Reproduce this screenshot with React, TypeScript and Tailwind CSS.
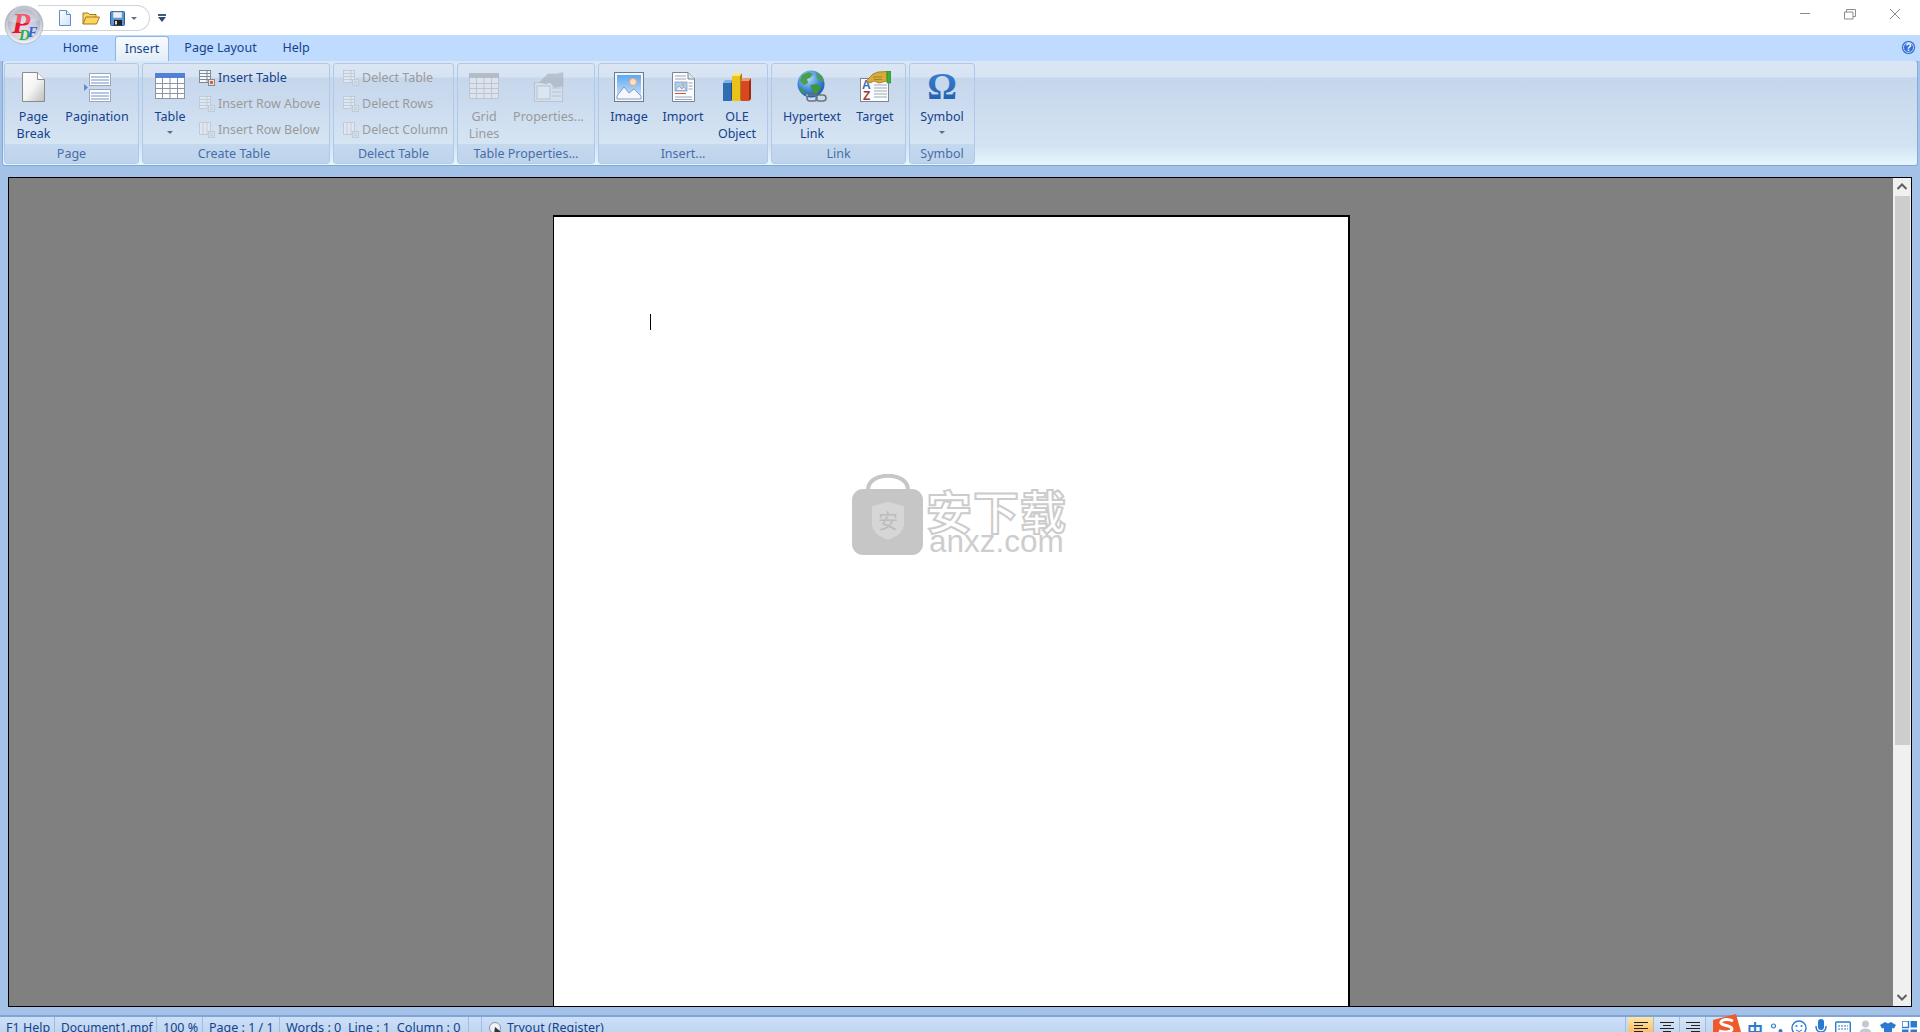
import React from "react";

function NewDocSmall() {
  return (
    <svg width="14" height="16" viewBox="0 0 14 16">
      <defs>
        <linearGradient id="qn" x1="0" y1="0" x2="1" y2="1">
          <stop offset="0" stopColor="#ffffff" />
          <stop offset="1" stopColor="#cfe2f7" />
        </linearGradient>
      </defs>
      <path d="M1.5 .5H8.5L12.5 4.5V15.5H1.5Z" fill="url(#qn)" stroke="#5d8fc6" />
      <path d="M8.5 .5V4.5H12.5" fill="#e8f1fb" stroke="#5d8fc6" />
    </svg>
  );
}

function FolderSmall() {
  return (
    <svg width="18" height="14" viewBox="0 0 18 14">
      <path d="M1 13V2H6L7.5 3.5H14V6" fill="#f7d774" stroke="#a37a1a" />
      <path d="M1 13L4 6H17.5L14.5 13Z" fill="#fbd55f" stroke="#a37a1a" />
    </svg>
  );
}

function SaveSmall() {
  return (
    <svg width="15" height="15" viewBox="0 0 15 15">
      <rect x=".5" y=".5" width="14" height="14" rx="1" fill="#5d94d6" stroke="#2b5f9f" />
      <rect x="3" y="1" width="9" height="6" fill="#e9f0f8" stroke="#7d9cc0" strokeWidth=".6" />
      <rect x="4" y="9" width="8" height="5.5" fill="#222" />
      <rect x="5" y="10" width="2" height="3.5" fill="#ddd" />
    </svg>
  );
}

function Orb() {
  return (
    <svg width="40" height="40" viewBox="0 0 40 40">
      <defs>
        <radialGradient id="orbIn" cx="0.5" cy="0.75" r="0.8">
          <stop offset="0" stopColor="#f0e2ea" />
          <stop offset="0.55" stopColor="#c9c9dc" />
          <stop offset="1" stopColor="#8d95aa" />
        </radialGradient>
        <linearGradient id="orbRim" x1="0" y1="0" x2="0" y2="1">
          <stop offset="0" stopColor="#a3a9b3" />
          <stop offset="1" stopColor="#f1f3f6" />
        </linearGradient>
      </defs>
      <circle cx="20" cy="20" r="19" fill="url(#orbRim)" stroke="#9aa1ac" strokeWidth=".6" />
      <circle cx="20" cy="20" r="16" fill="url(#orbIn)" />
      <text x="8" y="28" fontFamily="Liberation Serif" fontWeight="700" fontStyle="italic" fontSize="30" fill="#e8152a">P</text>
      <text x="15" y="35" fontFamily="Liberation Serif" fontWeight="700" fontStyle="italic" fontSize="15" fill="#1fb04a">D</text>
      <text x="24" y="32" fontFamily="Liberation Serif" fontWeight="700" fontStyle="italic" fontSize="14" fill="#3560d8">F</text>
      <path d="M5 16A15 15 0 0 1 35 15C26 19 14 19 5 16Z" fill="#ffffff" opacity=".3" />
    </svg>
  );
}

function HelpIcon() {
  return (
    <svg width="15" height="15" viewBox="0 0 15 15">
      <circle cx="7.5" cy="7.5" r="7" fill="#2f6fd6" stroke="#ffffff" strokeWidth=".5" />
      <circle cx="7.5" cy="7.5" r="5" fill="none" stroke="#ffffff" strokeWidth=".7" />
      <text x="7.5" y="11" textAnchor="middle" fontFamily="Liberation Sans" fontWeight="700" fontSize="10" fill="#fff">?</text>
    </svg>
  );
}

function PageBreakIcon() {
  return (
    <svg width="23" height="30" viewBox="0 0 23 30">
      <defs>
        <linearGradient id="pb" x1="0" y1="0" x2="1" y2="1">
          <stop offset="0" stopColor="#ffffff" />
          <stop offset="0.5" stopColor="#f4f4f4" />
          <stop offset="1" stopColor="#bdbdbd" />
        </linearGradient>
      </defs>
      <path d="M.5 .5H15.5L22.5 7.5V29.5H.5Z" fill="url(#pb)" stroke="#8b8b8b" />
      <path d="M15.5 .5V7.5H22.5" fill="#fff" stroke="#8b8b8b" />
    </svg>
  );
}

function PaginationIcon() {
  const lines = (y: number) => (
    <g>
      <rect x="5.5" y={y} width="21" height="12" fill="#fff" stroke="#9aa7b8" />
      <path d={`M7 ${y + 3.5}H25M7 ${y + 6.5}H25M7 ${y + 9.5}H25`} stroke="#6f8fc4" strokeWidth="1" />
    </g>
  );
  return (
    <svg width="27" height="29" viewBox="0 0 27 29">
      {lines(.5)}
      {lines(16.5)}
      <path d="M0 11L4 14.5L0 18Z" fill="#5c8bd6" />
    </svg>
  );
}

function BigTable({ gray = false }: { gray?: boolean }) {
  const head = gray ? "#b4bcc6" : "#4f81d8";
  const line = gray ? "#bcc5d0" : "#8a96a8";
  return (
    <svg width="30" height="26" viewBox="0 0 30 26" className="mb-[3px]">
      <rect x=".5" y=".5" width="29" height="25" fill={gray ? "#dbe3ed" : "#ffffff"} stroke={line} />
      <rect x="0" y="0" width="30" height="5" fill={head} />
      <path d="M0 10.5H30M0 15.5H30M0 20.5H30M7.5 5V26M15 5V26M22.5 5V26" stroke={line} strokeWidth="1" />
    </svg>
  );
}

function SmallTable({ active = false, column = false }: { active?: boolean; column?: boolean }) {
  const c = active ? "#7f8a99" : "#c1cbd8";
  return (
    <svg width="16" height="16" viewBox="0 0 16 16">
      <rect x=".5" y=".5" width="11" height="12" fill={active ? "#f6f8fb" : "#dfe7f1"} stroke={c} />
      <path d={column ? "M4 .5V12.5M8 .5V12.5" : "M.5 3.5H11.5M.5 6.5H11.5M.5 9.5H11.5M8 .5V12.5"} stroke={c} />
      <rect x="9.5" y="9.5" width="6" height="6" fill={active ? "#dfe6f0" : "#d4dde8"} stroke={c} />
      <rect x="11" y="11" width="3" height="3" fill={active ? "#e2602b" : "#c9d3de"} />
    </svg>
  );
}

function PropertiesIcon() {
  return (
    <svg width="30" height="30" viewBox="0 0 30 30" className="opacity-50">
      <rect x=".5" y="10.5" width="28" height="19" fill="#e0e6ee" stroke="#a6aeb8" />
      <rect x="3" y="14" width="13" height="13" fill="#eef2f6" stroke="#a6aeb8" />
      <path d="M18 16H27M18 20H27M18 24H27" stroke="#a6aeb8" />
      <path d="M6 10L14 2H23L29 .5V14L20 15L16 10L12 12Z" fill="#9ea6af" stroke="#8a929b" strokeWidth=".5" />
    </svg>
  );
}

function ImageIcon() {
  return (
    <svg width="30" height="30" viewBox="0 0 30 30">
      <defs>
        <linearGradient id="sky" x1="0" y1="0" x2="0" y2="1">
          <stop offset="0" stopColor="#5fa8f0" />
          <stop offset="1" stopColor="#d4e8fb" />
        </linearGradient>
      </defs>
      <rect x=".5" y=".5" width="29" height="29" fill="#f2f6fb" stroke="#6b7c8e" />
      <rect x="3" y="3" width="24" height="24" fill="url(#sky)" />
      <circle cx="19" cy="10" r="3.5" fill="#ffe0c2" stroke="#f3a27c" strokeWidth="1" />
      <path d="M3 24L10 15L15 21L20 17L27 24V27H3Z" fill="#f4f7fb" stroke="#6f88b8" strokeWidth=".8" />
    </svg>
  );
}

function ImportIcon() {
  return (
    <svg width="23" height="30" viewBox="0 0 23 30">
      <path d="M.5 .5H16L22.5 7V29.5H.5Z" fill="#fbfcfe" stroke="#7b8492" />
      <path d="M16 .5V7H22.5" fill="#dfe6ef" stroke="#7b8492" />
      <path d="M3 4H14M3 7H14" stroke="#9aa6b6" />
      <rect x="3" y="10" width="12" height="9" fill="#a9d0f2" stroke="#7f94b5" strokeWidth=".7" />
      <path d="M3.5 18.5L7 14L10 17L12 15L14.5 18.5Z" fill="#eef3fa" stroke="#5f7fb0" strokeWidth=".5" />
      <circle cx="11" cy="12.5" r="1.2" fill="#f4956a" />
      <path d="M16.5 11H20.5M16.5 14H20.5M16.5 17H20.5M3 25H20M3 27.5H20" stroke="#9aa6b6" />
      <path d="M3 21.5H14" stroke="#d94b3a" strokeWidth="1.2" />
    </svg>
  );
}

function OleIcon() {
  return (
    <svg width="29" height="30" viewBox="0 0 29 30">
      <path d="M0 11H8V29H0Z" fill="#2f6db3" />
      <path d="M0 11L2 8H10L8 11Z" fill="#7fb0e6" />
      <path d="M8 11L10 8V27L8 29Z" fill="#1e4c86" />
      <path d="M9 4H17V29H9Z" fill="#eac21a" />
      <path d="M9 4L11 1H19L17 4Z" fill="#f8e77a" />
      <path d="M17 4L19 1V27L17 29Z" fill="#a8840f" />
      <path d="M18 9H26V29H18Z" fill="#d8471e" />
      <path d="M18 9L20 6H28L26 9Z" fill="#f09a7a" />
      <path d="M26 9L28 6V27L26 29Z" fill="#9c2c0f" />
    </svg>
  );
}

function GlobeIcon() {
  return (
    <svg width="31" height="32" viewBox="0 0 31 32">
      <defs>
        <radialGradient id="gl" cx="0.4" cy="0.3" r="0.8">
          <stop offset="0" stopColor="#b5dcfb" />
          <stop offset="0.55" stopColor="#3e86d6" />
          <stop offset="1" stopColor="#174a9a" />
        </radialGradient>
      </defs>
      <circle cx="14" cy="14" r="13.5" fill="url(#gl)" />
      <path d="M5 5L12 2L16 4L13 8L10 9L11 13L7 15L3 11Z" fill="#4aa04a" />
      <path d="M19 3L25 6L27 12L23 11L20 8Z" fill="#4aa04a" />
      <path d="M13 15L20 14L24 17L20 24L16 23Z" fill="#3f9640" />
      <path d="M3 17L7 20L8 24L4 22Z" fill="#3f9640" />
      <rect x="10" y="25" width="10" height="6" rx="3" fill="none" stroke="#6c7480" strokeWidth="1.6" />
      <rect x="19" y="25" width="10" height="6" rx="3" fill="none" stroke="#6c7480" strokeWidth="1.6" />
      <path d="M9 25H11M29 31H31M30 24H31" stroke="#e8e04a" strokeWidth="1" />
    </svg>
  );
}

function TargetIcon() {
  return (
    <svg width="31" height="31" viewBox="0 0 31 31">
      <rect x=".5" y="7.5" width="28" height="23" fill="#fbfcfe" stroke="#7d8794" />
      <path d="M14 14H27M14 17H27M14 20H27M14 23H27M14 26H27" stroke="#9ca8b6" />
      <text x="2" y="18" fontFamily="Liberation Sans" fontWeight="700" fontSize="12" fill="#3a6cb6">A</text>
      <text x="3" y="29" fontFamily="Liberation Sans" fontWeight="700" fontSize="12" fill="#9c3a3a">Z</text>
      <path d="M6 10L13 3L18 1L27 .5V10L19 12L14 10L10 12Z" fill="#d9a93a" stroke="#8a6a18" strokeWidth=".7" />
      <path d="M13 6L22 6M14 8.5L22 8.5" stroke="#8a6a18" strokeWidth=".6" />
      <rect x="27" y="0" width="4" height="12" fill="#3fae3f" stroke="#1f7a1f" strokeWidth=".5" />
    </svg>
  );
}

function OmegaIcon() {
  return (
    <svg width="34" height="32" viewBox="0 0 34 32">
      <defs>
        <linearGradient id="om" x1="0" y1="0" x2="0" y2="1">
          <stop offset="0" stopColor="#3f86d8" />
          <stop offset="1" stopColor="#1b59a8" />
        </linearGradient>
      </defs>
      <text x="17" y="29" textAnchor="middle" fontFamily="Liberation Serif" fontWeight="700" fontSize="37" fill="url(#om)">Ω</text>
    </svg>
  );
}

function Arrow() {
  return <div className="w-0 h-0 border-l-[3px] border-r-[3px] border-t-[3px] border-l-transparent border-r-transparent border-t-[#5a6f8f]" />;
}

function Group({ title, width, titleClass = "", children }: { title: string; width: string; titleClass?: string; children: React.ReactNode }) {
  return (
    <div className={`${width} h-[101px] flex flex-col rounded-[3px] border border-[#aecae8] overflow-hidden bg-[linear-gradient(180deg,#dbe6f4_0,#d7e3f3_13px,#c6d7ec_14px,#c9d9ee_30px,#d6e5f3_80px)]`}>
      <div className="h-[80px] flex shrink-0">{children}</div>
      <div className={`flex-1 flex items-center justify-center bg-[linear-gradient(180deg,#c4d8ee,#bed4ec)] text-[#476ea9] text-[12.5px] leading-none pt-[1px] ${titleClass}`}>
        {title}
      </div>
    </div>
  );
}

function LargeButton({ width, icon, lines, disabled = false, arrow = false }: { width: string; icon: React.ReactNode; lines: string[]; disabled?: boolean; arrow?: boolean }) {
  return (
    <div className={`${width} flex flex-col items-center shrink-0`}>
      <div className="h-[30px] mt-[8px] flex items-end justify-center">{icon}</div>
      <div className={`mt-[6px] flex flex-col items-center leading-[17px] text-[12.5px] whitespace-nowrap ${disabled ? "text-[#9a9a9a]" : "text-[#15428b]"}`}>
        {lines.map((l) => (
          <span key={l}>{l}</span>
        ))}
        {arrow && <div className="mt-[6px]"><Arrow /></div>}
      </div>
    </div>
  );
}

function SmallButton({ label, active = false, column = false }: { label: string; active?: boolean; column?: boolean }) {
  return (
    <div className="h-[26px] flex items-center gap-[3px] whitespace-nowrap">
      <SmallTable active={active} column={column} />
      <span className={`text-[12.5px] ${active ? "text-[#15428b]" : "text-[#9a9a9a]"}`}>{label}</span>
    </div>
  );
}

function StatusCell({ width, children, textClass = "text-[12.5px]" }: { width: string; children?: React.ReactNode; textClass?: string }) {
  return (
    <div className={`${width} h-full shrink-0 pl-[6px] flex items-center whitespace-pre border-r border-[#9dbde3] text-[#15428b] ${textClass}`}>
      {children}
    </div>
  );
}

function AlignButton({ selected, lines }: { selected?: boolean; lines: string }) {
  return (
    <div className={`w-[26px] h-full shrink-0 flex justify-center pt-[3px] border-r border-[#9dbde3] ${selected ? "bg-[linear-gradient(180deg,#fde6a8,#f7ae4e)]" : "bg-[linear-gradient(180deg,#d8e6f6,#b9d1ee)]"}`}>
      <svg width="14" height="14" viewBox="0 0 14 14">
        <path d={lines} stroke="#222" strokeWidth="1" />
      </svg>
    </div>
  );
}

function ImeBar() {
  return (
    <div className="absolute right-0 top-0 h-[22px] w-[208px] flex items-start bg-[linear-gradient(90deg,transparent_25px,#ffffff_25px)]">
      <svg width="30" height="20" viewBox="0 0 30 20" className="absolute left-0 top-[-3px]">
        <path d="M1 6L24 0L29 18V20H1Z" fill="#f0592a" />
        <path d="M21 7C15 4 8 6 9 9C10 12 20 11 20 15C20 18 12 19 7 17" fill="none" stroke="#fff" strokeWidth="3" />
      </svg>
      <div className="ml-[35px] flex items-start gap-[8px] pt-[4px]">
        <span className="text-[#2a7bd0] text-[16px] leading-none font-bold font-['Noto_Sans_CJK_SC',sans-serif]">中</span>
        <svg width="12" height="12" viewBox="0 0 12 12" className="mt-[2px]">
          <circle cx="2.5" cy="3" r="2" fill="none" stroke="#2a7bd0" strokeWidth="1.2" />
          <circle cx="9.5" cy="8" r="2" fill="#2a7bd0" />
        </svg>
        <svg width="16" height="18" viewBox="0 0 16 18" className="mt-[-2px]">
          <circle cx="8" cy="9" r="7" fill="none" stroke="#2a7bd0" strokeWidth="1.4" />
          <circle cx="5.5" cy="7" r="1" fill="#2a7bd0" />
          <circle cx="10.5" cy="7" r="1" fill="#2a7bd0" />
          <path d="M5 11Q8 14 11 11" fill="none" stroke="#2a7bd0" />
        </svg>
        <svg width="12" height="18" viewBox="0 0 12 18" className="mt-[-2px]">
          <rect x="3" y="0" width="6" height="11" rx="3" fill="#2a7bd0" />
          <path d="M1 7C1 12 3 13 6 13C9 13 11 12 11 7" fill="none" stroke="#2a7bd0" strokeWidth="1.4" />
        </svg>
        <svg width="16" height="16" viewBox="0 0 16 16">
          <rect x=".7" y="1" width="14.6" height="14" rx="1" fill="none" stroke="#2a7bd0" strokeWidth="1.4" />
          <path d="M3 5H13M3 8H13" stroke="#2a7bd0" strokeDasharray="2 1" />
        </svg>
        <svg width="15" height="16" viewBox="0 0 15 16" className="ml-[-1px] mt-[-1px]">
          <circle cx="7.5" cy="4" r="3.5" fill="#c3c9d2" />
          <path d="M1 16C1 10 4 8.5 7.5 8.5C11 8.5 14 10 14 16Z" fill="#c3c9d2" />
        </svg>
        <svg width="16" height="16" viewBox="0 0 16 16" className="ml-[-1px]">
          <path d="M5 1L8 2.5L11 1L16 4L14 7.5L12 7V16H4V7L2 7.5L0 4Z" fill="#2a7bd0" />
        </svg>
        <svg width="15" height="16" viewBox="0 0 15 16" className="ml-[-2px]">
          <rect x="0" y="0" width="6.5" height="6.5" fill="none" stroke="#2a7bd0" strokeWidth="1.4" />
          <rect x="8.5" y="0" width="6.5" height="6.5" fill="#2a7bd0" />
          <rect x="0" y="8.5" width="6.5" height="7.5" fill="#2a7bd0" />
          <rect x="8.5" y="8.5" width="6.5" height="7.5" fill="#2a7bd0" />
        </svg>
      </div>
    </div>
  );
}

export default function App() {
  return (
    <div className="h-[1032px] w-[1920px] overflow-hidden flex flex-col bg-[#a4c2e8] font-['Noto_Sans',sans-serif]">
      {/* title bar */}
      <div className="h-[35px] shrink-0 bg-white relative flex items-start">
        <div className="h-[26px] w-[112px] mt-[5px] ml-[38px] rounded-r-[13px] border border-l-0 border-[#cfd4da] bg-white flex items-center pl-[20px] gap-[10px]">
          <NewDocSmall />
          <FolderSmall />
          <SaveSmall />
          <div className="ml-[-4px]"><Arrow /></div>
        </div>
        <div className="ml-[8px] mt-[14px] flex flex-col items-center gap-[1px]">
          <div className="w-[8px] h-[2px] bg-[#3d5a85]" />
          <div className="w-0 h-0 border-l-[4px] border-r-[4px] border-t-[5px] border-l-transparent border-r-transparent border-t-[#2c4a7c]" />
        </div>
        <div className="absolute left-[4px] top-[5px] z-20"><Orb /></div>
        <div className="ml-auto mr-[2px] flex items-start">
          <div className="w-[45px] h-[28px] flex justify-center pt-[13px]"><div className="w-[10px] h-px bg-[#8c8c8c]" /></div>
          <svg width="45" height="28" viewBox="0 0 45 28">
            <path d="M19.5 12V9.5H28.5V16.5H26M17.5 12H26V19H17.5Z" fill="none" stroke="#8c8c8c" />
          </svg>
          <svg width="46" height="28" viewBox="0 0 46 28">
            <path d="M18 9L28 19M28 9L18 19" stroke="#8c8c8c" />
          </svg>
        </div>
      </div>

      {/* tabs */}
      <div className="h-[26px] shrink-0 bg-[#bfdbff] flex items-end text-[12.5px] text-[#15428b] relative z-10 mb-[-1px]">
        <div className="w-[46px]" />
        <div className="w-[69px] h-[25px] flex items-center justify-center">Home</div>
        <div className="w-[54px] h-[25px] flex items-center justify-center rounded-t-[3px] border border-b-0 border-[#8fb5e3] bg-[linear-gradient(180deg,#f7fbff,#e3edf7)]">Insert</div>
        <div className="w-[103px] h-[25px] flex items-center justify-center">Page Layout</div>
        <div className="w-[48px] h-[25px] flex items-center justify-center">Help</div>
        <div className="ml-auto mr-[4px] mb-[6px] flex"><HelpIcon /></div>
      </div>

      {/* ribbon */}
      <div className="h-[106px] shrink-0 mx-[2px] rounded-[3px] border border-[#84abdd] border-b-[#7fa9c9] bg-[linear-gradient(180deg,#dbe6f4_0,#d9e4f3_16px,#c4d6ed_17px,#cbdbee_40px,#d3e3f2_85px,#e6f6fe_103px)] flex gap-[3px] pl-[1px] pt-[2px] text-[12.5px]">
        <Group title="Page" width="w-[135px]">
          <LargeButton width="w-[57px]" icon={<PageBreakIcon />} lines={["Page", "Break"]} />
          <LargeButton width="w-[70px]" icon={<PaginationIcon />} lines={["Pagination"]} />
        </Group>
        <Group title="Create Table" width="w-[188px]" titleClass="pr-[4px]">
          <LargeButton width="w-[54px]" icon={<BigTable />} lines={["Table"]} arrow />
          <div className="pl-[2px] pt-[1px]">
            <SmallButton label="Insert Table" active />
            <SmallButton label="Insert Row Above" />
            <SmallButton label="Insert Row Below" column />
          </div>
        </Group>
        <Group title="Delect Table" width="w-[121px]">
          <div className="pl-[9px] pt-[1px]">
            <SmallButton label="Delect Table" />
            <SmallButton label="Delect Rows" />
            <SmallButton label="Delect Column" column />
          </div>
        </Group>
        <Group title="Table Properties..." width="w-[138px]">
          <LargeButton width="w-[52px]" icon={<BigTable gray />} lines={["Grid", "Lines"]} disabled />
          <LargeButton width="w-[77px]" icon={<PropertiesIcon />} lines={["Properties..."]} disabled />
        </Group>
        <Group title="Insert..." width="w-[170px]">
          <LargeButton width="w-[60px]" icon={<ImageIcon />} lines={["Image"]} />
          <LargeButton width="w-[48px]" icon={<ImportIcon />} lines={["Import"]} />
          <LargeButton width="w-[60px]" icon={<OleIcon />} lines={["OLE", "Object"]} />
        </Group>
        <Group title="Link" width="w-[135px]">
          <LargeButton width="w-[80px]" icon={<GlobeIcon />} lines={["Hypertext", "Link"]} />
          <LargeButton width="w-[46px]" icon={<TargetIcon />} lines={["Target"]} />
        </Group>
        <Group title="Symbol" width="w-[66px]">
          <LargeButton width="w-[64px]" icon={<OmegaIcon />} lines={["Symbol"]} arrow />
        </Group>
      </div>

      {/* document area */}
      <div className="h-[830px] shrink-0 mt-[11px] mx-[8px] border border-black bg-[#808080] flex overflow-hidden">
        <div className="flex-1 pl-[544px] pt-[37px]">
          <div className="relative w-[797px] h-[800px] bg-white border-l border-t-2 border-r-2 border-black">
            <div className="absolute left-[96px] top-[97px] w-px h-[16px] bg-black" />
            <div className="absolute left-[298px] top-[257px] w-[216px] h-[82px] flex items-start">
              <svg width="72" height="82" viewBox="0 0 72 82" className="shrink-0">
                <path d="M16 16C16 -3 56 -3 56 16" fill="none" stroke="#c6c6c6" strokeWidth="4" />
                <rect x="0" y="15" width="71" height="66" rx="11" fill="#c6c6c6" />
                <path d="M20 32L36 28L52 32V50C52 58 44 63 36 66C28 63 20 58 20 50Z" fill="#d6d6d6" />
                <text x="36" y="55" textAnchor="middle" fontFamily="Noto Sans CJK SC" fontSize="20" fill="#bcbcbc">安</text>
              </svg>
              <div className="ml-[2px] flex flex-col items-start">
                <span className="text-[46px] leading-[50px] mt-[10px] font-bold tracking-[1px] text-white [-webkit-text-stroke:2px_#cccccc] font-['Noto_Sans_CJK_SC',sans-serif]">安下载</span>
                <span className="text-[31.5px] leading-[24px] mt-[-5px] ml-[3px] text-[#cdcdcd] font-['Liberation_Sans',sans-serif]">anxz.com</span>
              </div>
            </div>
          </div>
        </div>
        <div className="w-[18px] shrink-0 bg-[#f0f0f0] flex flex-col items-center">
          <svg width="18" height="18" viewBox="0 0 18 18" className="shrink-0">
            <path d="M4.5 11L9 6.5L13.5 11" fill="none" stroke="#606060" strokeWidth="2" />
          </svg>
          <div className="w-[15px] h-[549px] bg-[#cdcdcd] shrink-0" />
          <div className="flex-1" />
          <svg width="18" height="18" viewBox="0 0 18 18" className="shrink-0">
            <path d="M4.5 7L9 11.5L13.5 7" fill="none" stroke="#606060" strokeWidth="2" />
          </svg>
        </div>
      </div>

      {/* status bar */}
      <div className="h-[24px] shrink-0 mt-[8px] relative flex border-t-2 border-[#7fa5d6] bg-[linear-gradient(180deg,#cee0f6,#b7d0ef)]">
        <StatusCell width="w-[55px]">F1 Help</StatusCell>
        <StatusCell width="w-[102px]" textClass="text-[12px]">Document1.mpf</StatusCell>
        <StatusCell width="w-[46px]">100 %</StatusCell>
        <StatusCell width="w-[77px]">Page : 1 / 1</StatusCell>
        <StatusCell width="w-[189px]" textClass="text-[12.7px]">{"Words : 0  Line : 1  Column : 0"}</StatusCell>
        <StatusCell width="w-[13px]" />
        <div className="pl-[6px] flex items-center gap-[4px] text-[#15428b] text-[12.5px]">
          <svg width="15" height="15" viewBox="0 0 15 15">
            <circle cx="7" cy="7" r="5.5" fill="#eef3f9" stroke="#8a97a8" />
            <path d="M7 6L13 11L10 11.5L11 15L9 15L8 12L6 13Z" fill="#333" />
          </svg>
          <span>Tryout (Register)</span>
        </div>
        <div className="ml-auto flex h-full">
          <div className="w-[3px] border-l border-[#9dbde3]" />
          <AlignButton selected lines="M0 2.5H14M0 5.5H9M0 8.5H14M0 11.5H9" />
          <AlignButton lines="M0 2.5H14M3 5.5H11M0 8.5H14M3 11.5H11" />
          <AlignButton lines="M0 2.5H14M5 5.5H14M0 8.5H14M5 11.5H14" />
          <div className="w-[214px]" />
        </div>
        <ImeBar />
      </div>
    </div>
  );
}
